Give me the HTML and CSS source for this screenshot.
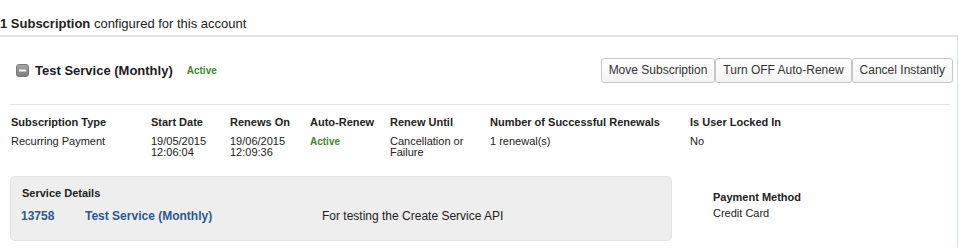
FILE: index.html
```html
<!DOCTYPE html>
<html lang="en">
<head>
    <meta charset="UTF-8">
    <meta name="viewport" content="width=device-width, initial-scale=1.0">
    <title>Subscriptions</title>
    <link rel="stylesheet" href="styles.css">
</head>
<body>
    <div class="summary"><strong>1 Subscription</strong> configured for this account</div>

    <div class="panel">
        <div class="sub-header">
            <svg class="toggle" width="13" height="13" viewBox="0 0 13 13">
                <defs>
                    <linearGradient id="tg" x1="0" y1="0" x2="0" y2="1">
                        <stop offset="0" stop-color="#a8a8a8"/>
                        <stop offset="1" stop-color="#7c7c7c"/>
                    </linearGradient>
                </defs>
                <rect x="0.5" y="0.5" width="12" height="12" rx="2.5" fill="url(#tg)" stroke="#7a7a7a"/>
                <rect x="3" y="5.5" width="7" height="2" fill="#f2f2f2"/>
            </svg>
            <span class="sub-title">Test Service (Monthly)</span>
            <span class="status">Active</span>
            <div class="actions">
                <button class="btn">Move Subscription</button>
                <button class="btn">Turn OFF Auto-Renew</button>
                <button class="btn">Cancel Instantly</button>
            </div>
        </div>

        <div class="details">
            <div class="info-grid">
                <div class="label">Subscription Type</div>
                <div class="label">Start Date</div>
                <div class="label">Renews On</div>
                <div class="label">Auto-Renew</div>
                <div class="label">Renew Until</div>
                <div class="label">Number of Successful Renewals</div>
                <div class="label">Is User Locked In</div>

                <div class="value">Recurring Payment</div>
                <div class="value">19/05/2015<br>12:06:04</div>
                <div class="value">19/06/2015<br>12:09:36</div>
                <div class="value status">Active</div>
                <div class="value">Cancellation or<br>Failure</div>
                <div class="value">1 renewal(s)</div>
                <div class="value">No</div>
            </div>

            <div class="bottom">
                <div class="service-box">
                    <div class="label">Service Details</div>
                    <div class="service-row">
                        <span class="service-id">13758</span>
                        <span class="service-name">Test Service (Monthly)</span>
                        <span class="service-desc">For testing the Create Service API</span>
                    </div>
                </div>
                <div class="payment">
                    <div class="label">Payment Method</div>
                    <div class="value pay-value">Credit Card</div>
                </div>
            </div>
        </div>
    </div>
</body>
</html>
```

FILE: styles.css
```css
html, body {
    margin: 0;
    padding: 0;
    background-color: #fff;
    color: #222;
    font-family: "Liberation Sans", Arial, sans-serif;
}
.summary {
    font-size: 13px;
    line-height: 15px;
    padding-top: 16px;
    margin-bottom: 4px;
}
.panel {
    width: 957px;
    border-top: 2px solid #e4e4e4;
    border-right: 1px solid #d3e1ec;
    padding-bottom: 6px;
}
.sub-header {
    display: flex;
    align-items: center;
    padding: 21px 4px 0 16px;
}
.toggle {
    display: block;
    margin-right: 6px;
}
.sub-title {
    font-size: 13px;
    font-weight: bold;
    color: #1c1c24;
}
.status {
    font-size: 10px;
    font-weight: bold;
    color: #3b8a2c;
}
.sub-header .status {
    margin-left: 14px;
}
.actions {
    display: flex;
    margin-left: auto;
}
.btn {
    font-family: "Liberation Sans", Arial, sans-serif;
    font-size: 12px;
    line-height: 15px;
    color: #333;
    padding: 4px 7px;
    border: 1px solid #c6c6c6;
    border-radius: 3px;
    background: linear-gradient(#fff, #f4f4f4);
    cursor: pointer;
}
.details {
    margin: 21px 7px 0 10px;
    border-top: 1px solid #e6e6e6;
    padding: 11px 0 0 1px;
}
.info-grid {
    display: grid;
    grid-template-columns: 140px 79px 80px 80px 100px 200px auto;
    row-gap: 7px;
}
.label {
    font-size: 11px;
    font-weight: bold;
    line-height: 13px;
}
.value {
    font-size: 11px;
    line-height: 11px;
}
.info-grid .status {
    font-size: 10px;
}
.bottom {
    display: flex;
    align-items: flex-start;
    margin-top: 18px;
    margin-left: -1px;
}
.service-box {
    width: 638px;
    background-color: #eee;
    border: 1px solid #e3e3e3;
    border-radius: 5px;
    padding: 10px 11px 17px 11px;
}
.service-row {
    display: flex;
    margin-top: 9px;
    font-size: 12px;
    line-height: 14px;
}
.service-id,
.service-name {
    font-weight: bold;
    color: #2b5a8c;
}
.service-id {
    width: 64px;
    margin-left: -1px;
}
.service-name {
    width: 237px;
}
.service-desc {
    color: #222;
}
.payment {
    margin-left: 41px;
    padding-top: 15px;
}
.pay-value {
    margin-top: 3px;
    line-height: 13px;
}
```
